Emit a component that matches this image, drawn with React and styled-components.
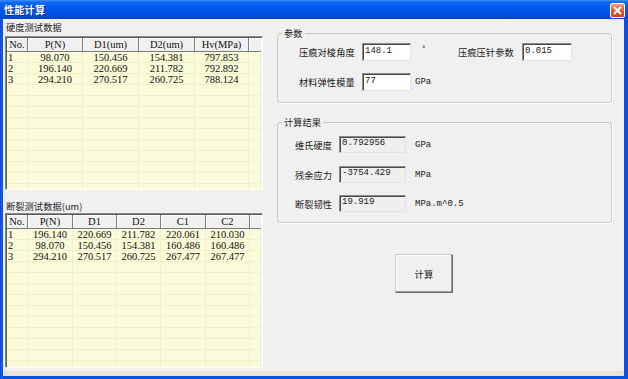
import styled, { createGlobalStyle } from "styled-components";

const hardnessCols = "21px 55px 56px 56px 54px 1fr";
const fractureCols = "21px 45px 44px 44px 45px 44px 1fr";

const hardnessHead = ["No.", "P(N)", "D1(um)", "D2(um)", "Hv(MPa)", ""];
const hardnessRows = [
  ["1", "98.070", "150.456", "154.381", "797.853"],
  ["2", "196.140", "220.669", "211.782", "792.892"],
  ["3", "294.210", "270.517", "260.725", "788.124"],
];

const fractureHead = ["No.", "P(N)", "D1", "D2", "C1", "C2", ""];
const fractureRows = [
  ["1", "196.140", "220.669", "211.782", "220.061", "210.030"],
  ["2", "98.070", "150.456", "154.381", "160.486", "160.486"],
  ["3", "294.210", "270.517", "260.725", "267.477", "267.477"],
];

const GlobalStyle = createGlobalStyle`
  html, body {
    margin: 0;
    padding: 0;
    overflow: hidden;
    background: #ffffff;
  }
`;

const DataTable = ({ cols, head, rows, height }) => {
  const filled = [...rows];
  while (filled.length < 13) filled.push([]);
  return (
    <TableBox height={height}>
      <GridRow cols={cols}>
        {head.map((h, i) => (
          <HeadCell key={i}>{h}</HeadCell>
        ))}
      </GridRow>
      {filled.map((r, ri) => (
        <GridRow cols={cols} key={ri}>
          {head.map((_, ci) => (
            <Cell key={ci} left={ci === 0}>
              {r[ci] || ""}
            </Cell>
          ))}
        </GridRow>
      ))}
    </TableBox>
  );
};

const App = () => {
  return (
    <>
      <GlobalStyle />
      <Window>
        <TitleBar>
          <Title>性能计算</Title>
          <CloseButton>
            <svg width="9" height="9" viewBox="0 0 9 9">
              <path d="M1 1 L8 8 M8 1 L1 8" stroke="#fff" strokeWidth="1.8" />
            </svg>
          </CloseButton>
        </TitleBar>
        <Body>
          <Main>
            <LeftCol>
              <SectionLabel>硬度测试数据</SectionLabel>
              <DataTable
                cols={hardnessCols}
                head={hardnessHead}
                rows={hardnessRows}
                height={154}
              />
              <SectionLabel second>断裂测试数据(um)</SectionLabel>
              <DataTable
                cols={fractureCols}
                head={fractureHead}
                rows={fractureRows}
                height={155}
              />
            </LeftCol>
            <RightCol>
              <Group>
                <Legend>参数</Legend>
                <GroupInner top={4} left={21} bottom={11}>
                  <FieldRow>
                    <FieldLabel width={55} gap={8}>压痕对棱角度</FieldLabel>
                    <TextBox width={49} defaultValue="148.1" />
                    <Unit width={47} pad={10} raised>°</Unit>
                    <FieldLabel width={55} gap={9}>压痕压针参数</FieldLabel>
                    <TextBox width={50} defaultValue="0.015" />
                  </FieldRow>
                  <FieldRow gapTop={12}>
                    <FieldLabel width={55} gap={8}>材料弹性模量</FieldLabel>
                    <TextBox width={49} defaultValue="77" />
                    <Unit width={40} pad={4}>GPa</Unit>
                  </FieldRow>
                </GroupInner>
              </Group>
              <Group second>
                <Legend>计算结果</Legend>
                <GroupInner top={8} left={17} bottom={10}>
                  <FieldRow short>
                    <FieldLabel width={38} gap={6}>维氏硬度</FieldLabel>
                    <TextBox width={67} readOnly short defaultValue="0.792956" />
                    <Unit width={60} pad={9}>GPa</Unit>
                  </FieldRow>
                  <FieldRow short gapTop={13}>
                    <FieldLabel width={38} gap={6}>残余应力</FieldLabel>
                    <TextBox width={67} readOnly short defaultValue="-3754.429" />
                    <Unit width={60} pad={9}>MPa</Unit>
                  </FieldRow>
                  <FieldRow short gapTop={12}>
                    <FieldLabel width={38} gap={6}>断裂韧性</FieldLabel>
                    <TextBox width={67} readOnly short defaultValue="19.919" />
                    <Unit width={80} pad={9}>MPa.m^0.5</Unit>
                  </FieldRow>
                </GroupInner>
              </Group>
              <CalcButton>计算</CalcButton>
            </RightCol>
          </Main>
          <StatusStrip />
        </Body>
      </Window>
    </>
  );
};

const Window = styled.div`
  width: 628px;
  height: 379px;
  box-sizing: border-box;
  display: flex;
  flex-direction: column;
  background: linear-gradient(90deg, #0838c8 0, #1a5ff0 1px, #0a50e0 3px);
  padding: 0 4px 3px 3px;
  font-family: "Noto Sans CJK SC", sans-serif;
`;

const TitleBar = styled.div`
  height: 19px;
  margin: 0 -4px 0 -3px;
  display: flex;
  align-items: center;
  justify-content: space-between;
  padding: 0 3px 0 4px;
  background: linear-gradient(
    180deg,
    #3d8ff8 0%,
    #0d68f4 12%,
    #0058ee 40%,
    #0052e4 75%,
    #0044c8 100%
  );
`;

const Title = styled.span`
  color: #ffffff;
  font-size: 10px;
  font-weight: bold;
  line-height: 19px;
  letter-spacing: 0.3px;
  text-shadow: 1px 1px 0 #0a2a90;
`;

const CloseButton = styled.div`
  width: 13px;
  height: 13px;
  margin-top: 2px;
  display: flex;
  align-items: center;
  justify-content: center;
  border: 1px solid #ffffff;
  border-radius: 2px;
  background: linear-gradient(180deg, #f0a080 0%, #e0603a 45%, #c8401e 100%);
`;

const Body = styled.div`
  flex: 1;
  display: flex;
  flex-direction: column;
  background: #f0f0f0;
`;

const Main = styled.div`
  flex: 1;
  display: flex;
  gap: 14px;
  padding: 0 12px 0 2px;
`;

const LeftCol = styled.div`
  width: 258px;
  display: flex;
  flex-direction: column;
`;

const SectionLabel = styled.div`
  font-size: 9.2px;
  letter-spacing: 0.1px;
  color: #202020;
  line-height: ${(p) => (p.second ? "14px" : "17px")};
  padding-top: ${(p) => (p.second ? "9px" : "0")};
  padding-left: 1px;
`;

const TableBox = styled.div`
  height: ${(p) => p.height}px;
  box-sizing: border-box;
  overflow: hidden;
  border-style: solid;
  border-width: 1px;
  border-color: #8a8a8a #ffffff #ffffff #8a8a8a;
  box-shadow: inset 1px 1px 0 #5a5a5a;
  padding: 1px 1px 0 1px;
  background: #fbfbd9;
`;

const GridRow = styled.div`
  display: grid;
  grid-template-columns: ${(p) => p.cols};
`;

const HeadCell = styled.div`
  height: 14px;
  box-sizing: border-box;
  background: #f0f0f0;
  border-right: 1px solid #7c7c7c;
  border-bottom: 1px solid #7c7c7c;
  box-shadow: inset 1px 1px 0 #ffffff;
  font-family: "Liberation Serif", serif;
  font-size: 10.5px;
  line-height: 13px;
  text-align: center;
  color: #101010;
  &:last-child {
    border-right: none;
  }
`;

const Cell = styled.div`
  height: 11px;
  box-sizing: border-box;
  border-right: 1px solid #f0f0cf;
  border-bottom: 1px solid #f0f0cf;
  font-family: "Liberation Serif", serif;
  font-size: 10.5px;
  line-height: 11px;
  text-align: ${(p) => (p.left ? "left" : "center")};
  padding-left: ${(p) => (p.left ? "1px" : "0")};
  color: #101010;
  white-space: nowrap;
`;

const RightCol = styled.div`
  flex: 1;
  display: flex;
  flex-direction: column;
  padding-top: 8px;
`;

const Group = styled.fieldset`
  margin: ${(p) => (p.second ? "13px 0 0 0" : "0")};
  padding: 0;
  min-width: 0;
  border: 1px solid #c9c9c0;
  border-radius: 3px;
  box-shadow: 1px 1px 0 #ffffff;
`;

const Legend = styled.legend`
  margin-left: 4px;
  padding: 0 2px;
  font-size: 9.2px;
  letter-spacing: 0.1px;
  line-height: 12px;
  color: #202020;
`;

const GroupInner = styled.div`
  display: flex;
  flex-direction: column;
  padding: ${(p) => `${p.top}px 0 ${p.bottom}px ${p.left}px`};
`;

const FieldRow = styled.div`
  display: flex;
  align-items: center;
  height: ${(p) => (p.short ? "17px" : "18px")};
  margin-top: ${(p) => p.gapTop || 0}px;
`;

const FieldLabel = styled.span`
  width: ${(p) => p.width}px;
  margin-right: ${(p) => p.gap}px;
  font-size: 9.2px;
  letter-spacing: 0.1px;
  white-space: nowrap;
  color: #202020;
`;

const TextBox = styled.input`
  width: ${(p) => p.width}px;
  height: ${(p) => (p.short ? "17px" : "18px")};
  box-sizing: border-box;
  margin: 0;
  padding: 0 0 3px 2px;
  border-style: solid;
  border-width: 1px;
  border-color: #8a8a8a #e4e4e4 #e4e4e4 #8a8a8a;
  box-shadow: inset 1px 1px 0 #4a4a4a;
  background: ${(p) => (p.readOnly ? "#efefef" : "#ffffff")};
  font-family: "Liberation Mono", monospace;
  font-size: 9px;
  color: #202020;
  outline: none;
`;

const Unit = styled.span`
  width: ${(p) => p.width}px;
  padding-left: ${(p) => p.pad}px;
  box-sizing: border-box;
  font-family: "Liberation Mono", monospace;
  font-size: 9px;
  color: #202020;
  align-self: ${(p) => (p.raised ? "flex-start" : "center")};
  line-height: ${(p) => (p.raised ? "12px" : "normal")};
  white-space: nowrap;
`;

const CalcButton = styled.button`
  align-self: flex-start;
  margin: 31px 0 0 118px;
  width: 58px;
  height: 39px;
  padding: 0;
  background: #f0f0f0;
  border-style: solid;
  border-width: 1px;
  border-color: #c8c8c8 #6a6a6a #6a6a6a #c8c8c8;
  box-shadow: inset -1px -1px 0 #9a9a9a, inset 1px 1px 0 #ffffff;
  font-family: "Noto Sans CJK SC", sans-serif;
  font-size: 9.2px;
  letter-spacing: 0.3px;
  color: #202020;
`;

const StatusStrip = styled.div`
  height: 5px;
  background: #e6e3d6;
`;

export default App;
